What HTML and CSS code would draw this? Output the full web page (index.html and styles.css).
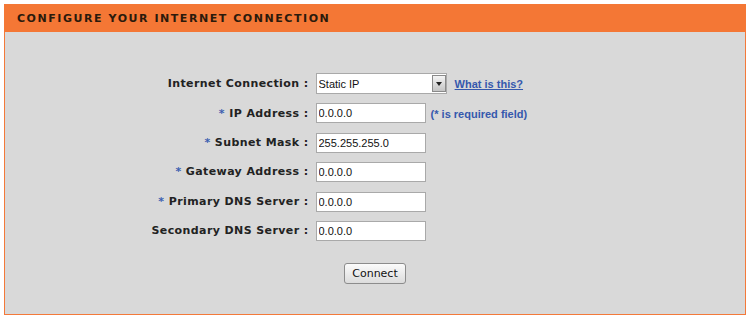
FILE: index.html
```html
<!DOCTYPE html>
<html>
<head>
    <link rel="stylesheet" href="styles.css">
</head>
<body>
    <div class="box">
        <h2 class="box-title">Configure your Internet Connection</h2>
        <div class="box-body">
            <table class="form">
                <tr>
                    <td class="label">Internet Connection :</td>
                    <td class="value">
                        <span class="select-wrap">
                            <select class="select">
                                <option>Static IP</option>
                                <option>DHCP</option>
                                <option>PPPoE</option>
                            </select>
                            <span class="select-arrow"></span>
                        </span>
                        <a class="help" href="#">What is this?</a>
                    </td>
                </tr>
                <tr>
                    <td class="label"><span class="req">*</span> IP Address :</td>
                    <td class="value"><input class="field" type="text" value="0.0.0.0"> <span class="note">(* is required field)</span></td>
                </tr>
                <tr>
                    <td class="label"><span class="req">*</span> Subnet Mask :</td>
                    <td class="value"><input class="field" type="text" value="255.255.255.0"></td>
                </tr>
                <tr>
                    <td class="label"><span class="req">*</span> Gateway Address :</td>
                    <td class="value"><input class="field" type="text" value="0.0.0.0"></td>
                </tr>
                <tr>
                    <td class="label"><span class="req">*</span> Primary DNS Server :</td>
                    <td class="value"><input class="field" type="text" value="0.0.0.0"></td>
                </tr>
                <tr>
                    <td class="label">Secondary DNS Server :</td>
                    <td class="value"><input class="field" type="text" value="0.0.0.0"></td>
                </tr>
            </table>
            <div class="actions">
                <button class="btn">Connect</button>
            </div>
        </div>
    </div>
</body>
</html>
```
FILE: styles.css
```css
body {
    margin: 0;
    padding: 4px 2px 2px 4px;
    background-color: #fff;
    font-family: "DejaVu Sans", sans-serif;
    color: #222;
}

.box {
    border: 1px solid #f3793a;
    border-top: none;
}

.box-title {
    margin: 0 -1px;
    height: 28px;
    line-height: 29px;
    padding-left: 13px;
    background-color: #f47735;
    color: #2b1a0c;
    font-size: 11px;
    font-weight: bold;
    text-transform: uppercase;
    letter-spacing: 1.55px;
}

.box-body {
    background-color: #d9d9d9;
    height: 282px;
    padding-top: 37px;
    box-sizing: border-box;
}

.form {
    margin: 0 auto;
    border-collapse: collapse;
}

.form td {
    height: 29.4px;
    padding: 0;
    vertical-align: middle;
    white-space: nowrap;
}

.form td.value {
    width: 283px;
}

.label {
    text-align: right;
    padding-right: 7px !important;
    font-size: 11px;
    font-weight: bold;
    letter-spacing: 0.4px;
    color: #222;
}

.req {
    color: #3c5fb0;
}

.field {
    width: 110px;
    height: 20px;
    box-sizing: border-box;
    border: 1px solid #a9a9a9;
    padding: 0 2px;
    font-family: "Liberation Sans", sans-serif;
    font-size: 11px;
    color: #111;
    background-color: #fff;
    vertical-align: middle;
}

.select-wrap {
    display: inline-flex;
    align-items: center;
    height: 19px;
    border: 1px solid #a9a9a9;
    background-color: #fff;
    vertical-align: middle;
}

.select {
    appearance: none;
    -webkit-appearance: none;
    border: none;
    outline: none;
    background: transparent;
    width: 115px;
    height: 17px;
    padding: 0 2px;
    font-family: "Liberation Sans", sans-serif;
    font-size: 11px;
    color: #111;
}

.select-arrow {
    width: 14px;
    height: 17px;
    box-sizing: border-box;
    border: 1px solid #8a8a8a;
    background: linear-gradient(#f4f4f4, #c4c4c4);
    display: flex;
    align-items: center;
    justify-content: center;
}

.select-arrow::after {
    content: "";
    border-left: 3px solid transparent;
    border-right: 3px solid transparent;
    border-top: 4px solid #222;
}

.help {
    margin-left: 3px;
    font-family: "Liberation Sans", sans-serif;
    font-size: 11px;
    font-weight: bold;
    color: #3558ad;
    text-decoration: underline;
    vertical-align: middle;
}

.note {
    font-family: "Liberation Sans", sans-serif;
    font-size: 11px;
    font-weight: bold;
    color: #3558ad;
    vertical-align: middle;
}

.actions {
    text-align: center;
    padding-top: 17px;
}

.btn {
    height: 21px;
    padding: 0 7px;
    font-family: "DejaVu Sans", sans-serif;
    font-size: 11px;
    color: #111;
    background: linear-gradient(#fbfbfb, #dcdcdc);
    border: 1px solid #8c8c8c;
    border-radius: 3px;
    cursor: pointer;
}
```
